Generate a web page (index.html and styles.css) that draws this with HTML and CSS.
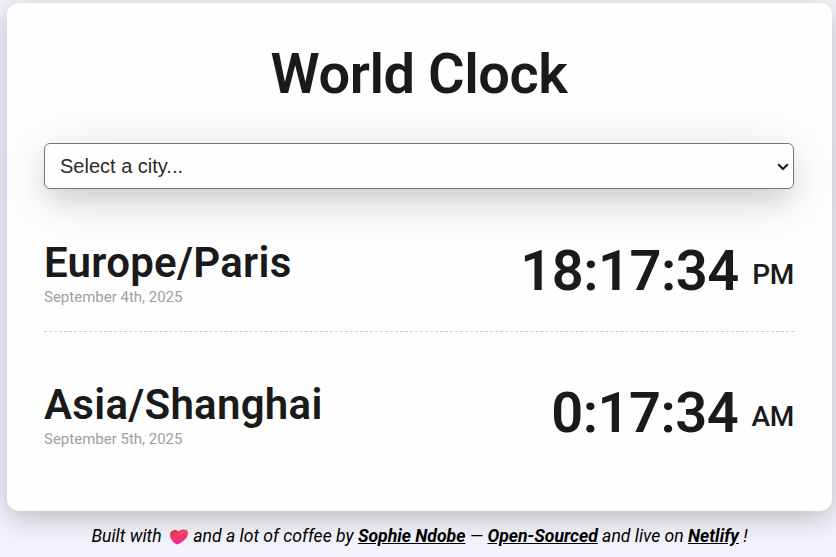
FILE: index.html
```
<!DOCTYPE html>
<html lang="en">
<head>
<meta charset="utf-8">
<title>World Clock</title>
<link rel="stylesheet" href="styles.css">
</head>
<body>
<main class="container">
  <h1>World Clock</h1>
  <div class="select-wrap">
    <select class="city-select" aria-label="City"><option>Select a city...</option></select>
    <svg class="chevron" viewBox="0 0 12 8" aria-hidden="true"><path d="M1.200 1.200L6 6L10.800 1.200"/></svg>
  </div>
  <section class="city">
    <div><h2>Europe/Paris</h2><div class="date">September 4th, 2025</div></div>
    <div class="time">18:17:34 <small>PM</small></div>
  </section>
  <section class="city">
    <div><h2>Asia/Shanghai</h2><div class="date">September 5th, 2025</div></div>
    <div class="time">0:17:34 <small>AM</small></div>
  </section>
</main>
<footer>Built with
  <svg class="heart" viewBox="0 0 20 18" aria-hidden="true">
    <defs><linearGradient id="heart" x1="0" y1="0" x2=".35" y2="1"><stop stop-color="#d92b4c"/><stop offset=".5" stop-color="#ef3d62"/><stop offset="1" stop-color="#ef27a0"/></linearGradient></defs>
    <path fill="url(#heart)" d="M8 16.500C4 14.500 1 11 1 7C1 2.500 6.500 .5 9.500 3.500C12 .5 19 .5 19 5C19 10 13 15 8 16.500Z"/>
    <path class="heart-light" d="M10.500 7C11 4 15 2 17 3.500C15 4 13 6 10.500 7Z"/>
  </svg>
  and a lot of coffee by <a href="#">Sophie Ndobe</a> — <a href="#">Open-Sourced</a> and live on <a href="#">Netlify</a> !</footer>
</body>
</html>
```
FILE: styles.css
```
* { box-sizing: border-box; }
body {
  margin: 0;
  height: 557px;
  padding: 3px 4px 0 7px;
  overflow: hidden;
  background: #f5f4fd;
  color: #1a1a1a;
  font-family: Roboto, sans-serif;
}
.container {
  height: 508px;
  padding: 37px 38px 0 37px;
  border-radius: 12px;
  background: #fefefe;
  box-shadow: 0 7px 29px rgba(50, 50, 50, .3);
}
h1, h2 { margin: 0; }
h1 { font-size: 56px; line-height: 68px; text-align: center; font-weight: 650; letter-spacing: -.45px; }
.select-wrap { position: relative; margin-top: 35px; }
.city-select {
  display: block;
  appearance: none;
  width: 100%;
  height: 46px;
  margin: 0;
  padding: 0 15px;
  border: 1px solid #767676;
  border-radius: 6px;
  background: #fefefe;
  color: #2b2b2b;
  font: 20px "Liberation Sans", sans-serif;
  box-shadow: 0 13px 27px -5px rgba(0, 0, 0, .15), 0 10px 60px rgba(0, 0, 0, .12);
}
.chevron { position: absolute; right: 5px; top: 20px; width: 12px; height: 8px; pointer-events: none; }
.chevron path { fill: none; stroke: #1a1a1a; stroke-width: 2; }
.city {
  display: flex;
  justify-content: space-between;
  height: 142px;
  padding-top: 48px;
}
.city + .city { border-top: 1px dashed #ccc; padding-top: 47px; }
h2 { font-size: 42px; line-height: 52px; margin-bottom: -2px; font-weight: 650; letter-spacing: .28px; }
.date { font-size: 15px; line-height: 20px; color: #a0a0a0; }
.time { font-size: 56px; line-height: 68px; font-weight: 600; letter-spacing: -.5px; }
.time small { font-size: 28px; font-weight: 500; letter-spacing: -.3px; vertical-align: 6.5px; line-height: 1; }
footer {
  margin-top: 14px;
  font-size: 17.6px;
  line-height: 22px;
  font-style: italic;
  text-align: center;
  color: #000;
}
footer a { color: #000; font-weight: 700; }
.heart { width: 20px; height: 18px; margin: 0 0 0 3px; vertical-align: -4px; }
.heart-light { fill: #ff6470; }
```
